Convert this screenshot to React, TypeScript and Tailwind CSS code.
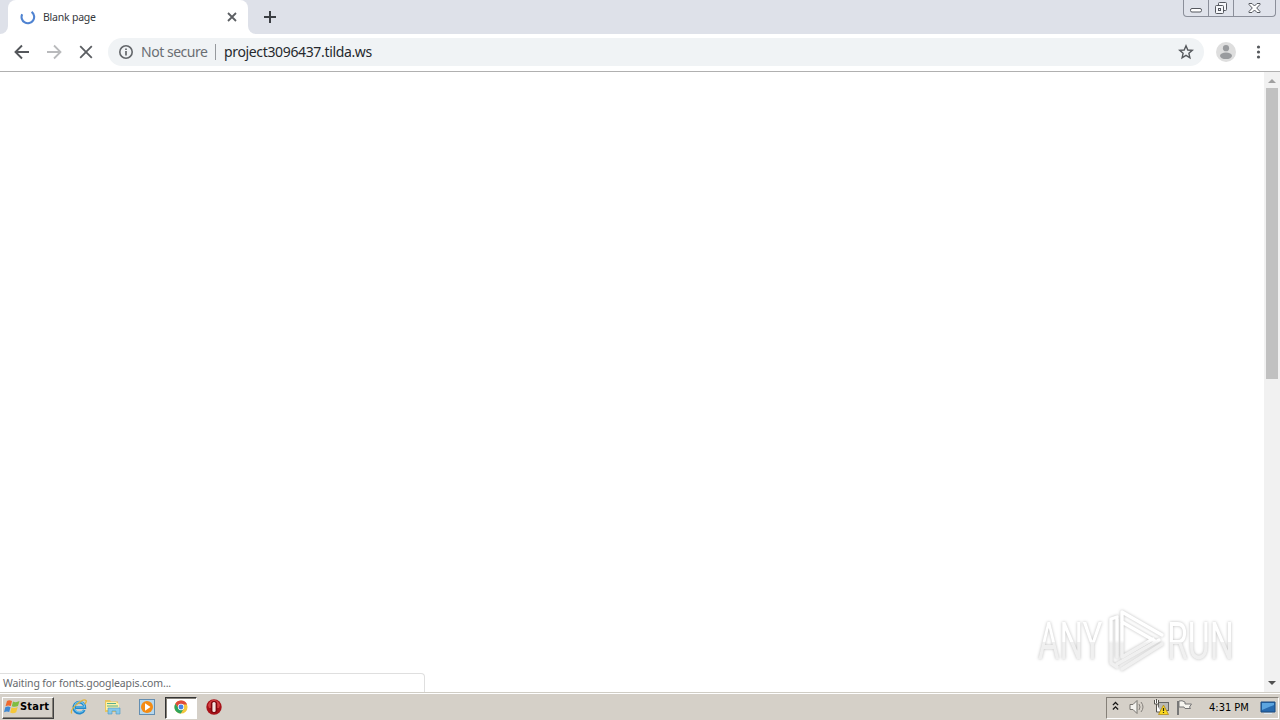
import React from "react";

function TabStrip() {
  return (
    <div className="flex h-[34px] shrink-0 bg-[#dee1e9]">
      <div className="flex w-2 items-end bg-white">
        <div className="h-full w-2 rounded-br-lg bg-[#dee1e9]" />
      </div>
      <div className="flex h-full w-60 items-center rounded-t-lg bg-white pl-3">
        <svg width="16" height="16" viewBox="0 0 16 16" fill="none">
          <path d="M2.2 5.2A6.3 6.3 0 1 0 11.6 2.9" stroke="#4f83d1" strokeWidth="2.1" />
        </svg>
        <span className="ml-[7px] w-[180px] whitespace-nowrap text-[10.5px] leading-4 tracking-[-0.22px] text-[#35383c]">Blank page</span>
        <svg className="ml-[4px]" width="10" height="10" viewBox="0 0 10 10">
          <path d="M1 1L9 9M9 1L1 9" stroke="#5c5f63" strokeWidth="1.8" />
        </svg>
      </div>
      <div className="flex w-2 items-end bg-white">
        <div className="h-full w-2 rounded-bl-lg bg-[#dee1e9]" />
      </div>
      <div className="flex w-7 items-center justify-center">
        <svg width="12" height="12" viewBox="0 0 12 12">
          <path d="M6 0V12M0 6H12" stroke="#3b3e43" strokeWidth="2" />
        </svg>
      </div>
      <div className="ml-auto mr-[4px] flex h-[17px] w-[93px] rounded-b-[4px] border border-t-0 border-[#8b8f9a] bg-[#e0e3eb]">
        <div className="flex w-[25px] items-center justify-center border-r border-[#8b8f9a]">
          <svg className="mt-1" width="13" height="6" viewBox="0 0 13 6">
            <rect x=".5" y="1.5" width="11" height="3.5" rx="1.5" fill="#fff" stroke="#55585f" />
          </svg>
        </div>
        <div className="flex w-[25px] items-center justify-center border-r border-[#8b8f9a]">
          <svg width="14" height="14" viewBox="0 0 14 14" fill="#f6f7fa" stroke="#55585f">
            <rect x="4.5" y="1.5" width="8" height="8" rx="1" />
            <rect x="1.5" y="4.5" width="8" height="8" rx="1" />
            <rect x="4.5" y="7.5" width="2" height="2" />
          </svg>
        </div>
        <div className="flex flex-1 items-center justify-center">
          <svg width="13" height="12" viewBox="0 0 13 12">
            <path d="M1 1.5H4L6.5 4L9 1.5H12V2.5L8.7 6L12 9.5V10.5H9L6.5 8L4 10.5H1V9.5L4.3 6L1 2.5Z" fill="#fff" stroke="#55585f" />
          </svg>
        </div>
      </div>
    </div>
  );
}

function Toolbar() {
  return (
    <div className="flex h-[38px] shrink-0 items-center border-b border-[#b0b0b0] bg-white pb-px">
      <svg className="ml-[14px]" width="16" height="16" viewBox="0 0 16 16" fill="none">
        <path d="M15 8H2M8 1.5L1.5 8L8 14.5" stroke="#54575b" strokeWidth="1.9" />
      </svg>
      <svg className="ml-4" width="16" height="16" viewBox="0 0 16 16" fill="none">
        <path d="M1 8H14M8 1.5L14.5 8L8 14.5" stroke="#b9babc" strokeWidth="1.8" />
      </svg>
      <svg className="ml-4" width="16" height="16" viewBox="0 0 16 16">
        <path d="M2.2 2.2L13.8 13.8M13.8 2.2L2.2 13.8" stroke="#5b5e62" strokeWidth="1.8" />
      </svg>
      <div className="ml-[14px] flex h-7 w-[1096px] items-center rounded-full bg-[#f0f3f5] pl-[10px] pr-[10px]">
        <svg width="16" height="16" viewBox="0 0 16 16" fill="none">
          <circle cx="8" cy="8" r="6.2" stroke="#63666a" strokeWidth="1.6" />
          <path d="M8 7V11.5M8 4.4V6" stroke="#63666a" strokeWidth="1.7" />
        </svg>
        <span className="ml-[7px] w-[74px] whitespace-nowrap text-[14px] leading-5 tracking-[-0.47px] text-[#6a6e73]">Not secure</span>
        <div className="h-4 w-px bg-[#96999d]" />
        <span className="ml-2 whitespace-nowrap text-[14px] leading-5 tracking-[-0.35px] text-[#26292d]">project3096437.tilda.ws</span>
        <svg className="ml-auto" width="16" height="16" viewBox="0 0 16 16" fill="none">
          <path d="M8 1.8L9.8 6L14.3 6.4L10.9 9.3L11.9 13.8L8 11.4L4.1 13.8L5.1 9.3L1.7 6.4L6.2 6Z" stroke="#56595d" strokeWidth="1.4" />
        </svg>
      </div>
      <svg className="ml-3" width="20" height="20" viewBox="0 0 20 20">
        <circle cx="10" cy="10" r="10" fill="#dedede" />
        <circle cx="10" cy="6.2" r="3.1" fill="#999b9e" />
        <ellipse cx="10" cy="13.8" rx="6" ry="3.3" fill="#999b9e" />
      </svg>
      <svg className="ml-5" width="5" height="14" viewBox="0 0 5 14" fill="#55585c">
        <circle cx="2.5" cy="2" r="1.6" /><circle cx="2.5" cy="7" r="1.6" /><circle cx="2.5" cy="12" r="1.6" />
      </svg>
    </div>
  );
}

function Watermark() {
  return (
    <div className="absolute bottom-[19px] right-[24px] flex h-[66px] w-[204px] items-center font-['Roboto',sans-serif] text-[52px] font-normal leading-[66px] drop-shadow-[0_0_1.5px_rgba(0,0,0,0.26)]">
      <div className="w-[71px] shrink-0 pt-[3px]">
        <span className="inline-block origin-left scale-x-[0.635] bg-linear-to-b from-white from-50% to-[#f0f0f0] to-50% bg-clip-text pl-[3px] text-transparent">ANY</span>
      </div>
      <svg className="shrink-0" width="60" height="66" viewBox="0 0 60 66" fill="none" strokeLinejoin="round" strokeLinecap="round">
        <defs>
          <linearGradient id="fade" gradientUnits="userSpaceOnUse" x1="0" y1="0" x2="0" y2="66">
            <stop offset=".5" stopColor="#ffffff" /><stop offset=".55" stopColor="#f0f0f0" />
          </linearGradient>
        </defs>
        <path d="M10 10L4 12V56L10 60M10 12V50M15 50V5L55 28M15 15L48 34M15 50L46 32M10 57L52 33M15 62L55 37" stroke="url(#fade)" strokeWidth="3.4" />
      </svg>
      <div className="w-[73px] shrink-0 pt-[3px]">
        <span className="inline-block origin-left scale-x-[0.65] bg-linear-to-b from-white from-50% to-[#f0f0f0] to-50% bg-clip-text text-transparent">RUN</span>
      </div>
    </div>
  );
}

function Taskbar() {
  return (
    <div className="flex h-7 shrink-0 items-center border-t border-[#d0cdc5] bg-[#d5d0c8] pt-[3px] shadow-[inset_0_1px_0_#ffffff]">
      <div className="ml-[2px] flex h-[22px] w-[52px] items-center border border-b-[#404040] border-l-white border-r-[#404040] border-t-white bg-[#d5d0c8] pl-px shadow-[inset_-1px_-1px_0_#858078]">
        <svg className="mb-[2px] shrink-0" width="16" height="16" viewBox="0 0 16 16">
          <path d="M3 2Q5 .5 8 2L6.8 7Q4 6 1.5 7.3Z" fill="#ef692e" />
          <path d="M9 2.5Q12 4 15.5 2L14 7Q11 8.5 7.8 7.2Z" fill="#7fbd42" />
          <path d="M1.3 8.3Q4 7 6.5 8.2L5.2 13Q3 11.8 0 13.2Z" fill="#3e88d3" />
          <path d="M7.5 8.5Q11 9.5 13.7 8L12.2 13.2Q9 15 6.2 13.5Z" fill="#f5c739" />
        </svg>
        <span className="whitespace-nowrap pb-px font-['DejaVu_Sans_Condensed','DejaVu_Sans',sans-serif] text-[11px] font-bold tracking-[0.2px] text-black">Start</span>
      </div>
      <svg className="mb-[2px] ml-[16px]" width="18" height="18" viewBox="0 0 18 18" fill="none">
        <path d="M14.3 12A5.5 5.5 0 1 1 14.8 9.5H5" stroke="#2388cb" strokeWidth="2.8" />
        <path d="M13.5 12.3A5.2 5.2 0 1 1 14.7 9H6" stroke="#74c7ee" strokeWidth="1.1" />
        <path d="M1.8 15.5C-1 11 13 0 16 2.5Q17 3.5 14.8 6" stroke="#e2b43b" strokeWidth="1.3" />
      </svg>
      <svg className="mb-[2px] ml-4" width="18" height="18" viewBox="0 0 18 18">
        <path d="M1 2H6L7 3.5H14V14H1Z" fill="#e8c660" />
        <path d="M2 4H12L15 6V12H2Z" fill="#fff2a6" />
        <path d="M3 5.5H12M3 8H14" stroke="#56ad91" />
        <path d="M4 10H16V16H12V13H8V16H4Z" fill="#87c8ea" stroke="#4998c5" strokeWidth=".6" />
      </svg>
      <svg className="mb-[2px] ml-[17px]" width="16" height="16" viewBox="0 0 16 16">
        <rect x=".5" y=".5" width="15" height="15" fill="#b6d7ed" stroke="#648eb1" />
        <circle cx="8" cy="8" r="6" fill="#f48b13" />
        <path d="M6 4.3V11.7L11.5 8Z" fill="#fff" />
      </svg>
      <div className="ml-[10px] flex h-[22px] w-8 items-center justify-center border border-b-white border-l-[#333] border-r-white border-t-[#333] bg-white pb-[2px] shadow-[inset_1px_1px_0_#858078]">
        <svg width="14" height="14" viewBox="0 0 16 16">
          <circle cx="8" cy="8" r="7.5" fill="#f4c83e" />
          <path d="M1.5 4.2A7.5 7.5 0 0 1 14.9 5H8A3.2 3.2 0 0 0 5 9Z" fill="#df4b3c" />
          <path d="M1.5 4.2A7.5 7.5 0 0 0 7.8 15.5L11 10A3.5 3.5 0 0 1 5 9Z" fill="#2ea45d" />
          <circle cx="8" cy="8" r="3.6" fill="#fff" /><circle cx="8" cy="8" r="2.8" fill="#4783e5" />
        </svg>
      </div>
      <svg className="mb-[2px] ml-[9px]" width="16" height="16" viewBox="0 0 16 16">
        <circle cx="8" cy="8" r="7.7" fill="#a81219" /><path d="M2 6Q4 1 8 1T14 6L13 9H3Z" fill="#d44143" />
        <rect x="4.8" y="2" width="6.4" height="12" rx="3" fill="#7e060d" /><rect x="6.4" y="3" width="3.2" height="10" rx="1.5" fill="#f2e4df" />
      </svg>
      <div className="ml-auto mr-px flex h-[22px] w-[173px] items-center border border-b-white border-l-[#858078] border-r-white border-t-[#858078]">
        <svg className="mb-[4px] ml-[5px]" width="7" height="10" viewBox="0 0 8 10" fill="none">
          <path d="M1 4L4 1L7 4M1 9L4 6L7 9" stroke="#161616" strokeWidth="1.5" />
        </svg>
        <svg className="mb-[2px] ml-[10px]" width="16" height="16" viewBox="0 0 16 16" fill="none">
          <path d="M1 5.5H4L8 1.5V14.5L4 10.5H1Z" fill="#f4f3ef" stroke="#77746f" />
          <path d="M10 5Q12 8 10 11M12 3Q16 8 12 13" stroke="#85817c" />
        </svg>
        <svg className="mb-[2px] ml-2" width="16" height="16" viewBox="0 0 16 16">
          <rect x="5.5" y="3.5" width="10" height="8" fill="#b9b9b4" stroke="#666" />
          <path d="M1.5 1V5H5.5V1M3.5 0V4M3.5 5V13H8" fill="#fff" stroke="#55534d" />
          <path d="M10.5 6L15.5 15.5H5.5Z" fill="#f9d820" stroke="#aa8112" strokeWidth=".7" />
          <path d="M10.5 9V12M10.5 13V14" stroke="#292718" strokeWidth="1.2" />
        </svg>
        <svg className="mb-[2px] ml-[7px]" width="17" height="17" viewBox="0 0 17 17">
          <path d="M2 2V16" stroke="#777" strokeWidth="2" /><path d="M3 2Q6 1 9 3V5H15.5L13.5 8L14.5 9.5H9L8 8H3Z" fill="#f6f5ef" stroke="#777" />
        </svg>
        <span className="ml-[16px] w-[43px] whitespace-nowrap font-['DejaVu_Sans_Condensed','DejaVu_Sans',sans-serif] text-[11px] text-black">4:31 PM</span>
        <svg className="ml-[8px]" width="16" height="14" viewBox="0 0 16 14">
          <path d="M1 1H15V11H1Z" fill="#286aae" stroke="#194a80" /><path d="M2 2H14V4L2 9Z" fill="#5ca5df" /><path d="M4 12H12V13H4Z" fill="#dce9f6" />
        </svg>
      </div>
    </div>
  );
}

export default function App() {
  return (
    <div className="flex h-[720px] w-[1280px] flex-col overflow-hidden bg-white font-['Noto_Sans',sans-serif]">
      <TabStrip />
      <Toolbar />
      <div className="flex min-h-0 flex-1">
        <main className="relative flex-1 bg-white">
          <div className="absolute bottom-0 left-0 flex h-[19px] w-[425px] items-center rounded-tr-[4px] border-r border-t border-[#dfdfdf] bg-white pl-[3px]">
            <span className="whitespace-nowrap text-[10.5px] leading-4 tracking-[-0.12px] text-[#66696d]">Waiting for fonts.googleapis.com...</span>
          </div>
          <Watermark />
        </main>
        <div className="flex w-4 flex-col items-center bg-[#f1f1f1]">
          <svg width="16" height="16" viewBox="0 0 16 16"><path d="M4 11L8 7L12 11Z" fill="#a0a0a0" /></svg>
          <div className="h-[291px] w-3 bg-[#c1c1c1]" />
          <svg className="mt-auto" width="16" height="16" viewBox="0 0 16 16"><path d="M4 5L8 9L12 5Z" fill="#505050" /></svg>
        </div>
      </div>
      <Taskbar />
    </div>
  );
}
